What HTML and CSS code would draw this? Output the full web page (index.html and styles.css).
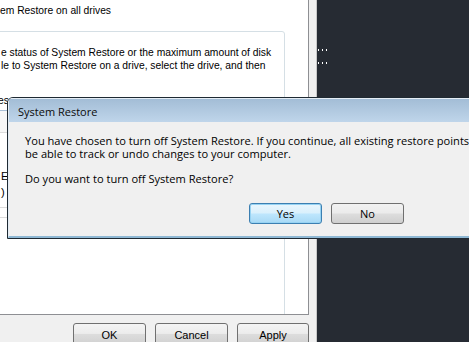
FILE: index.html
```html
<!DOCTYPE html>
<html>
<head>
<meta charset="utf-8">
<link rel="stylesheet" href="styles.css">
</head>
<body>
<div class="screen">
  <div class="props">
    <div class="page">
      <p class="topline">em Restore on all drives</p>
      <div class="group">
        <p class="gline">e status of System Restore or the maximum amount of disk</p>
        <p class="gline">le to System Restore on a drive, select the drive, and then</p>
        <p class="gline cut">es</p>
        <div class="list">
          <div class="lhead"></div>
          <div class="lrow first">E</div>
          <div class="lrow">)</div>
          <div class="lline"></div>
        </div>
      </div>
    </div>
    <div class="footer">
      <button class="btn">OK</button>
      <button class="btn">Cancel</button>
      <button class="btn apply">Apply</button>
    </div>
  </div>
  <div class="desktop">
    <div class="dots"><i></i><i></i><i></i></div>
    <div class="dots"><i></i><i></i><i></i></div>
  </div>
  <div class="dialog">
    <div class="title">System Restore</div>
    <div class="body">
      <p class="msg">You have chosen to turn off System Restore. If you continue, all existing restore points</p>
      <p class="msg">be able to track or undo changes to your computer.</p>
      <p class="msg q">Do you want to turn off System Restore?</p>
      <div class="actions">
        <button class="dbtn yes">Yes</button>
        <button class="dbtn">No</button>
      </div>
    </div>
  </div>
</div>
</body>
</html>
```

FILE: styles.css
```css
* { box-sizing: border-box; }
html, body { margin: 0; padding: 0; }
body { width: 469px; height: 342px; overflow: hidden; background: #262b33; }
p { margin: 0; }

.screen {
  position: relative;
  display: flex;
  width: 469px;
  height: 342px;
  overflow: hidden;
  background: #262b33;
  font-family: "DejaVu Sans", sans-serif;
}

.props {
  flex: none;
  width: 317px;
  display: flex;
  flex-direction: column;
  background: #f0f0f0;
  border-right: 1px solid #c8c8c8;
}

.page {
  width: 309px;
  height: 315px;
  flex: none;
  background: #fff;
  border-right: 1px solid #8e8f93;
  border-bottom: 1px solid #8e8f93;
  padding-top: 4px;
  font-family: "Liberation Sans", Arial, sans-serif;
  font-size: 10.3px;
  line-height: 13px;
  color: #000;
  overflow: hidden;
}

.topline { white-space: nowrap; }

.group {
  margin-top: 14px;
  margin-left: -20px;
  width: 305px;
  height: 300px;
  border: 1px solid #d5dfe5;
  border-radius: 3px;
  padding-top: 14px;
  padding-left: 20px;
}

.gline { white-space: nowrap; }
.cut { margin-top: 22px; margin-left: -3px; }

.list {
  margin-top: 3px;
  margin-left: -10px;
  width: 260px;
  border-top: 1px solid #a9bfd6;
}
.lhead { height: 22px; border-bottom: 1px solid #dcdcdc; background: #f7f7f7; }
.lrow { height: 16px; line-height: 14px; padding-left: 10px; font-size: 11px; }
.lrow.first { margin-top: 36px; }
.lline { margin-top: 6px; height: 11px; border-top: 1px solid #dcdcdc; border-bottom: 1px solid #dcdcdc; }

.footer {
  display: flex;
  gap: 9px;
  padding-top: 8px;
  padding-left: 73px;
}

.btn {
  width: 73px;
  height: 23px;
  flex: none;
  border: 1px solid #707070;
  border-radius: 3px;
  background: linear-gradient(#f4f4f4, #ececec 45%, #dcdcdc 50%, #d0d0d0);
  font-family: "Liberation Sans", Arial, sans-serif;
  font-size: 11px;
  color: #000;
  padding: 0;
}
.btn.apply { width: 72px; }

.desktop {
  flex: 1;
  padding-top: 49px;
  padding-left: 1px;
}
.dots {
  display: flex;
  gap: 2px;
  height: 13px;
}
.dots i {
  display: block;
  width: 1px;
  height: 2px;
  background: #fff;
  margin-right: 1px;
}

.dialog {
  position: absolute;
  left: 7px;
  top: 97px;
  width: 475px;
  height: 142px;
  border: 1px solid #1f2a33;
  border-radius: 6px 6px 0 0;
  background: #f0f0f0;
  display: flex;
  flex-direction: column;
  font-family: "Open Sans", "Noto Sans", sans-serif;
  color: #000;
  overflow: hidden;
}

.title {
  height: 24px;
  flex: none;
  padding-left: 9px;
  font-size: 11px;
  line-height: 25px;
  background: linear-gradient(#a3bdd6, #bfd5ea);
  border-top: 1px solid #e4edf5;
  border-left: 1px solid #e4edf5;
  color: #0b0b0b;
}

.body {
  flex: 1;
  padding: 12px 0 0 16px;
  border-bottom: 2px solid #8fb8d4;
  border-left: 1px solid #e4edf5;
  font-size: 11.1px;
  line-height: 13px;
}

.msg { white-space: nowrap; height: 13px; }
.q { margin-top: 12px; }

.actions {
  display: flex;
  gap: 9px;
  margin-top: 18px;
  padding-left: 224px;
}

.dbtn {
  width: 73px;
  height: 21px;
  border: 1px solid #707070;
  border-radius: 3px;
  background: linear-gradient(#f2f2f2, #ebebeb 48%, #dddddd 52%, #cfcfcf);
  font-family: "Open Sans", "Noto Sans", sans-serif;
  font-size: 11px;
  color: #000;
  padding: 0;
}
.dbtn.yes {
  border-color: #3c7fb1;
  background: linear-gradient(#eaf6fd, #d9f0fc 48%, #bee6fd 52%, #a7d9f5);
  box-shadow: inset 0 0 0 1px #97d3f3;
}
```
